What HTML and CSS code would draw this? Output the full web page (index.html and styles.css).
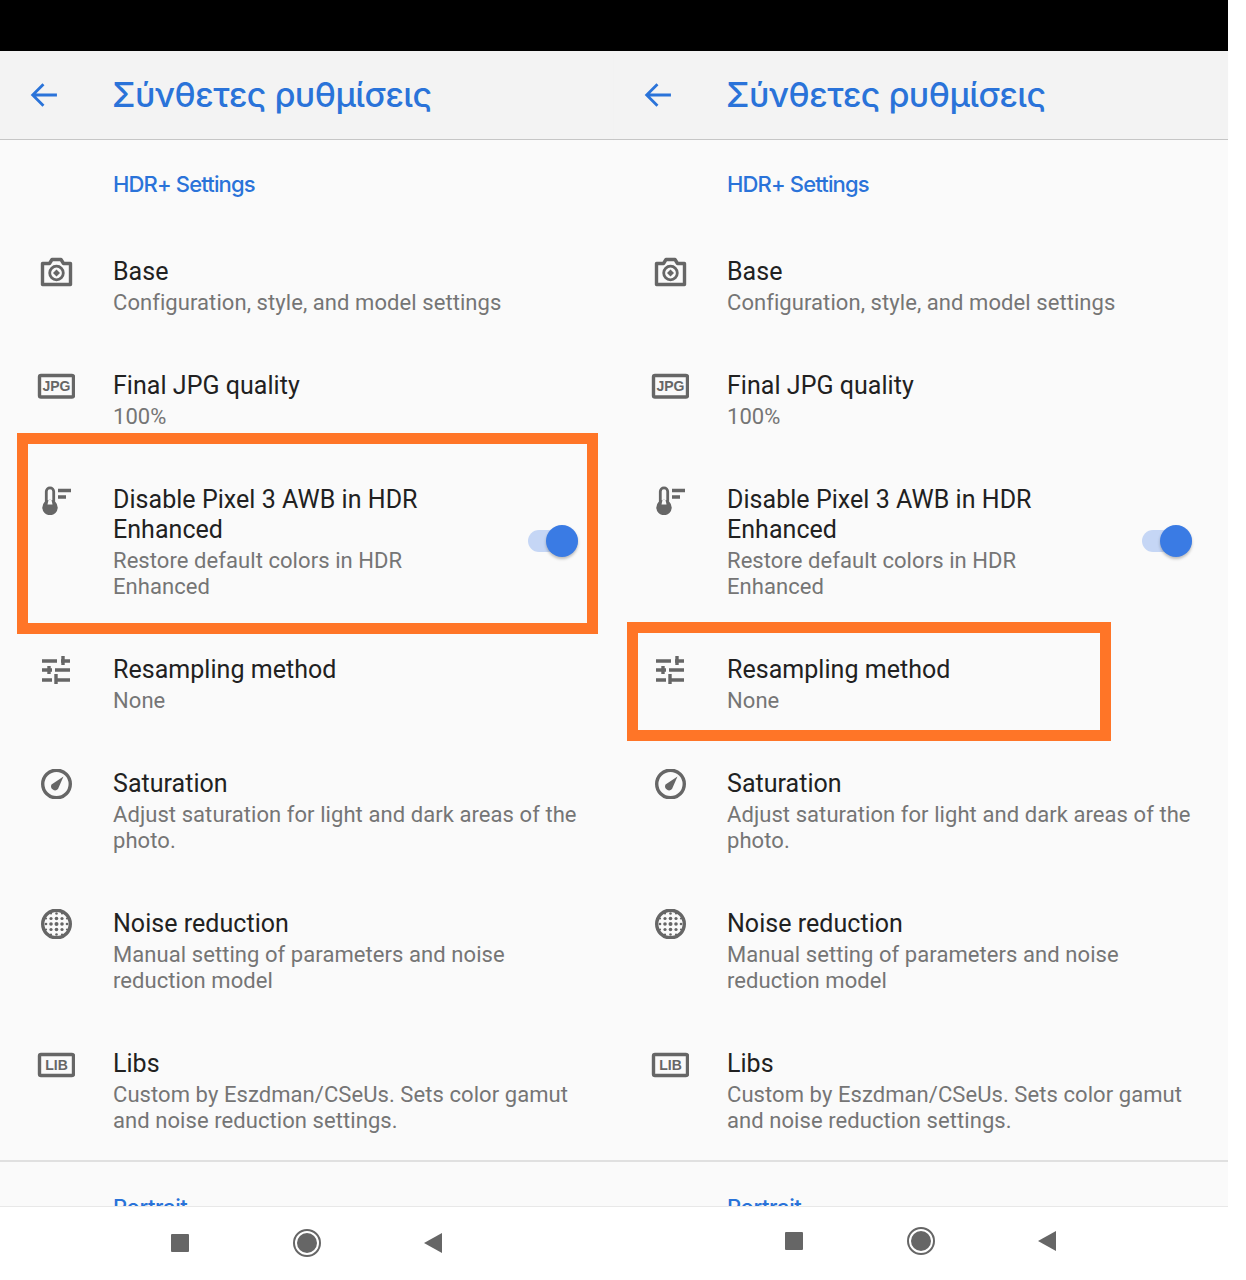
FILE: index.html
```html
<!DOCTYPE html>
<html>

<head>
    <title>Σύνθετες ρυθμίσεις</title>
    <link rel="stylesheet" href="styles.css">
</head>

<body>
    <!-- Shared icons -->
    <svg class="icon-defs">
        <symbol id="icon-back" viewBox="0 0 26 24"><path d="M25 12H3M12.5 2 2.500 12l10 10" /></symbol>
        <symbol id="icon-base" viewBox="0 0 38 30">
            <path class="line" stroke-linejoin="round" d="M5.500 6.500h7l2.500-4h9l2.500 4h7v21h-28z" />
            <circle class="line thin" cx="19.500" cy="16" r="6.800" />
            <path class="fill" d="M19.500 12.500l3.500 3.500-3.500 3.500-3.500-3.500z" />
        </symbol>
        <symbol id="icon-thermo" viewBox="0 0 38 30">
            <circle class="fill" cx="13" cy="22.500" r="7.700" />
            <path class="line thin" d="M9.300 19V6.500a3.700 3.700 0 0 1 7.400 0V19" />
            <path class="hole" d="M11.500 15h3l1 4.500h-5z" />
            <path class="line" d="M21 5.500h13M21 12h8" />
        </symbol>
        <symbol id="icon-sliders" viewBox="0 0 30 30">
            <path class="line" d="M1 6h15M20 6h9M22 1v9M1 15h10M14 15h15M8 11v8M1 25h10M14 25h15M15 19v10" />
        </symbol>
        <symbol id="icon-compass" viewBox="0 0 38 30">
            <circle class="line" cx="19.500" cy="15" r="13.800" />
            <path class="fill" d="M26.500 7.500l-5.500 12.500a4 4 0 0 1-6.500-4.500z" />
        </symbol>
        <symbol id="icon-noise" viewBox="0 0 38 30">
            <circle class="line" cx="19.500" cy="15" r="13.800" />
            <g class="fill">
                <circle cx="14" cy="4.500" r="1.100" /><circle cx="19.500" cy="4.500" r="1.300" /><circle cx="25" cy="4.500" r="1.100" />
                <circle cx="9" cy="9.500" r="1.100" /><circle cx="14" cy="9.500" r="1.600" /><circle cx="19.500" cy="9.500" r="1.800" /><circle cx="25" cy="9.500" r="1.600" /><circle cx="30" cy="9.500" r="1.100" />
                <circle cx="9" cy="15" r="1.300" /><circle cx="14" cy="15" r="1.800" /><circle cx="19.500" cy="15" r="2" /><circle cx="25" cy="15" r="1.800" /><circle cx="30" cy="15" r="1.300" />
                <circle cx="9" cy="20.500" r="1.100" /><circle cx="14" cy="20.500" r="1.600" /><circle cx="19.500" cy="20.500" r="1.800" /><circle cx="25" cy="20.500" r="1.600" /><circle cx="30" cy="20.500" r="1.100" />
                <circle cx="14" cy="25.500" r="1.100" /><circle cx="19.500" cy="25.500" r="1.300" /><circle cx="25" cy="25.500" r="1.100" />
            </g>
        </symbol>
    </svg>

    <div class="screens">
        <!-- Left phone -->
        <div class="phone">
            <div class="status-bar"></div>
            <header class="app-bar">
                <svg class="back-icon"><use href="#icon-back" /></svg>
                <h1>Σύνθετες ρυθμίσεις</h1>
            </header>
            <div class="content">
                <h2 class="section-title">HDR+ Settings</h2>
                <div class="row">
                    <svg class="icon"><use href="#icon-base" /></svg>
                    <div class="row-text">
                        <div class="row-title">Base</div>
                        <div class="row-sub">Configuration, style, and model settings</div>
                    </div>
                </div>
                <div class="row">
                    <svg class="icon" viewBox="0 0 38 30"><rect class="line" x="2.500" y="4.500" width="34" height="21.500" rx="1.500" /><text class="icon-text" x="19.500" y="20">JPG</text></svg>
                    <div class="row-text">
                        <div class="row-title">Final JPG quality</div>
                        <div class="row-sub">100%</div>
                    </div>
                </div>
                <div class="row">
                    <svg class="icon"><use href="#icon-thermo" /></svg>
                    <div class="row-text">
                        <div class="row-title">Disable Pixel 3 AWB in HDR<br>Enhanced</div>
                        <div class="row-sub">Restore default colors in HDR<br>Enhanced</div>
                    </div>
                    <div class="switch"><span class="switch-thumb"></span></div>
                </div>
                <div class="row">
                    <svg class="icon"><use href="#icon-sliders" /></svg>
                    <div class="row-text">
                        <div class="row-title">Resampling method</div>
                        <div class="row-sub">None</div>
                    </div>
                </div>
                <div class="row">
                    <svg class="icon"><use href="#icon-compass" /></svg>
                    <div class="row-text">
                        <div class="row-title">Saturation</div>
                        <div class="row-sub">Adjust saturation for light and dark areas of the<br>photo.</div>
                    </div>
                </div>
                <div class="row">
                    <svg class="icon"><use href="#icon-noise" /></svg>
                    <div class="row-text">
                        <div class="row-title">Noise reduction</div>
                        <div class="row-sub">Manual setting of parameters and noise<br>reduction model</div>
                    </div>
                </div>
                <div class="row">
                    <svg class="icon" viewBox="0 0 38 30"><rect class="line" x="2.500" y="5.500" width="34" height="21" rx="1.500" /><text class="icon-text" x="19.500" y="21">LIB</text></svg>
                    <div class="row-text">
                        <div class="row-title">Libs</div>
                        <div class="row-sub">Custom by Eszdman/CSeUs. Sets color gamut<br>and noise reduction settings.</div>
                    </div>
                </div>
                <div class="divider"></div>
                <h2 class="section-title next">Portrait</h2>
            </div>
            <nav class="nav-bar">
                <span class="nav-square"></span>
                <span class="nav-home"></span>
                <span class="nav-back"></span>
            </nav>
            <!-- Highlight frame -->
            <div class="frame frame-switch"></div>
        </div>

        <!-- Right phone -->
        <div class="phone">
            <div class="status-bar"></div>
            <header class="app-bar">
                <svg class="back-icon"><use href="#icon-back" /></svg>
                <h1>Σύνθετες ρυθμίσεις</h1>
            </header>
            <div class="content">
                <h2 class="section-title">HDR+ Settings</h2>
                <div class="row">
                    <svg class="icon"><use href="#icon-base" /></svg>
                    <div class="row-text">
                        <div class="row-title">Base</div>
                        <div class="row-sub">Configuration, style, and model settings</div>
                    </div>
                </div>
                <div class="row">
                    <svg class="icon" viewBox="0 0 38 30"><rect class="line" x="2.500" y="4.500" width="34" height="21.500" rx="1.500" /><text class="icon-text" x="19.500" y="20">JPG</text></svg>
                    <div class="row-text">
                        <div class="row-title">Final JPG quality</div>
                        <div class="row-sub">100%</div>
                    </div>
                </div>
                <div class="row">
                    <svg class="icon"><use href="#icon-thermo" /></svg>
                    <div class="row-text">
                        <div class="row-title">Disable Pixel 3 AWB in HDR<br>Enhanced</div>
                        <div class="row-sub">Restore default colors in HDR<br>Enhanced</div>
                    </div>
                    <div class="switch"><span class="switch-thumb"></span></div>
                </div>
                <div class="row">
                    <svg class="icon"><use href="#icon-sliders" /></svg>
                    <div class="row-text">
                        <div class="row-title">Resampling method</div>
                        <div class="row-sub">None</div>
                    </div>
                </div>
                <div class="row">
                    <svg class="icon"><use href="#icon-compass" /></svg>
                    <div class="row-text">
                        <div class="row-title">Saturation</div>
                        <div class="row-sub">Adjust saturation for light and dark areas of the<br>photo.</div>
                    </div>
                </div>
                <div class="row">
                    <svg class="icon"><use href="#icon-noise" /></svg>
                    <div class="row-text">
                        <div class="row-title">Noise reduction</div>
                        <div class="row-sub">Manual setting of parameters and noise<br>reduction model</div>
                    </div>
                </div>
                <div class="row">
                    <svg class="icon" viewBox="0 0 38 30"><rect class="line" x="2.500" y="5.500" width="34" height="21" rx="1.500" /><text class="icon-text" x="19.500" y="21">LIB</text></svg>
                    <div class="row-text">
                        <div class="row-title">Libs</div>
                        <div class="row-sub">Custom by Eszdman/CSeUs. Sets color gamut<br>and noise reduction settings.</div>
                    </div>
                </div>
                <div class="divider"></div>
                <h2 class="section-title next">Portrait</h2>
            </div>
            <nav class="nav-bar nav-bar-raised">
                <span class="nav-square"></span>
                <span class="nav-home"></span>
                <span class="nav-back"></span>
            </nav>
            <!-- Highlight frame -->
            <div class="frame frame-method"></div>
        </div>
    </div>
</body>

</html>
```

FILE: styles.css
```css
/* General styles */
body {
    margin: 0;
    background-color: #fff;
    font-family: Roboto, sans-serif;
}

.icon-defs {
    display: none;
}

.screens {
    display: flex;
    width: 1228px;
    height: 1280px;
}

.phone {
    position: relative;
    display: flex;
    flex-direction: column;
    width: 614px;
    height: 1280px;
}

.status-bar {
    height: 51px;
    background-color: #000;
}

/* App bar */
.app-bar {
    display: flex;
    align-items: center;
    height: 88px;
    padding-left: 30px;
    background-color: #f3f3f3;
    border-bottom: 1px solid #c6c6c6;
    box-shadow: 0 2px 2px -1px rgba(0, 0, 0, 0.1);
}

.back-icon {
    width: 28px;
    height: 26px;
    margin-right: 54px;
    fill: none;
    stroke: #2a73d9;
    stroke-width: 2.6;
}

.app-bar h1 {
    margin: 0 0 2px;
    font-family: Inter, sans-serif;
    font-size: 34px;
    font-weight: 500;
    letter-spacing: -0.55px;
    color: #2a73d9;
}

/* Settings list */
.content {
    flex: 1;
    min-height: 0;
    overflow: hidden;
    background-color: #fafafa;
}

.section-title {
    margin: 0;
    padding: 30px 0 32px 113px;
    font-family: Inter, sans-serif;
    font-size: 22px;
    line-height: 28px;
    font-weight: 500;
    letter-spacing: -0.85px;
    color: #2a73d9;
}

.section-title.next {
    padding-top: 31px;
    letter-spacing: -0.4px;
}

.row {
    display: flex;
    align-items: flex-start;
    padding: 27px 36px 28px 0;
}

.icon {
    flex: none;
    width: 38px;
    height: 30px;
    margin: 0 38px 0 37px;
}

.line {
    fill: none;
    stroke: #666;
    stroke-width: 3.4;
}

.line.thin {
    stroke-width: 2.8;
}

.fill {
    fill: #666;
}

.hole {
    fill: #fafafa;
}

.icon-text {
    font-family: "Liberation Sans", sans-serif;
    font-size: 14px;
    font-weight: 700;
    fill: #666;
    text-anchor: middle;
}

.row-text {
    flex: 1;
}

.row-title {
    font-size: 25px;
    line-height: 30px;
    letter-spacing: 0.04px;
    color: #212121;
}

.row-sub {
    margin-top: 3px;
    font-size: 22px;
    line-height: 26px;
    letter-spacing: 0.07px;
    color: #757575;
}

/* Switch */
.switch {
    position: relative;
    align-self: center;
    width: 50px;
    height: 22px;
    margin-bottom: 4px;
    border-radius: 11px;
    background-color: #c5d6f5;
}

.switch-thumb {
    position: absolute;
    top: -5px;
    right: 0;
    width: 32px;
    height: 32px;
    border-radius: 50%;
    background-color: #3a7be4;
    box-shadow: 0 2px 3px rgba(0, 0, 0, 0.25);
}

.divider {
    margin-top: -2px;
    border-top: 2px solid #e0e0e0;
}

/* Navigation bar */
.nav-bar {
    box-sizing: border-box;
    flex: none;
    display: flex;
    align-items: center;
    justify-content: space-between;
    height: 74px;
    padding: 0 172px 1px 171px;
    background-color: #fff;
    border-top: 1px solid #e8e8e8;
}

.nav-bar-raised {
    padding-bottom: 5px;
}

.nav-square {
    width: 18px;
    height: 18px;
    border-radius: 1px;
    background-color: #666;
}

.nav-home {
    box-sizing: border-box;
    width: 28px;
    height: 28px;
    padding: 2px;
    border: 2px solid #666;
    border-radius: 50%;
    background-color: #666;
    background-clip: content-box;
}

.nav-back {
    width: 0;
    height: 0;
    border-top: 10px solid transparent;
    border-bottom: 10px solid transparent;
    border-right: 18px solid #666;
}

/* Orange highlight frames */
.frame {
    position: absolute;
    box-sizing: border-box;
    border: 11px solid #ff7527;
}

.frame-switch {
    left: 17px;
    top: 433px;
    width: 581px;
    height: 201px;
}

.frame-method {
    left: 13px;
    top: 622px;
    width: 484px;
    height: 119px;
}
```
